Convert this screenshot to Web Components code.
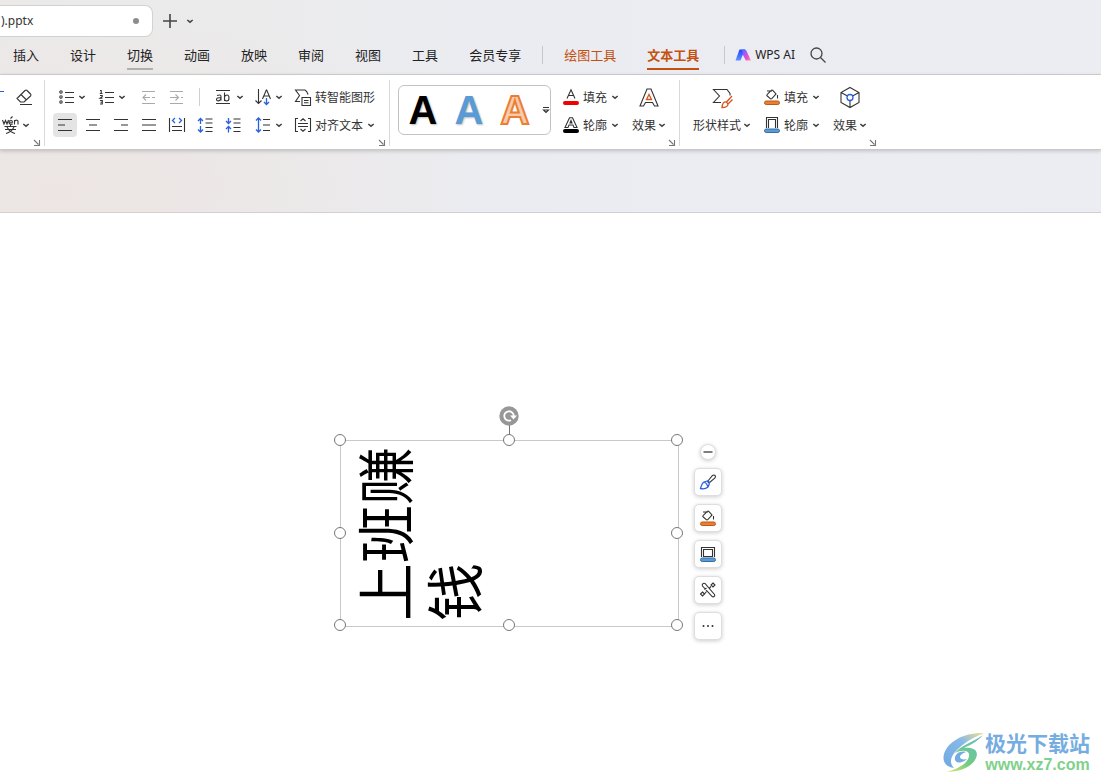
<!DOCTYPE html>
<html lang="zh-CN">
<head>
<meta charset="utf-8">
<title>WPS</title>
<style>
html,body{margin:0;height:100%}
body{font:12px/18px "Noto Sans","Noto Sans CJK SC",sans-serif;color:#222;overflow:hidden}
</style>
</head>
<body>
<wps-app></wps-app>
<script>
const pen = (color, width) => `fill="none" stroke="${color}" stroke-width="${width}"`;
const line = pen('currentColor', 1.1);
const blue = pen('#2b5fe0', 1.3);
const rust = pen('#d4571e', 1.3);
const grey = pen('#aaa', 1.1);
const BUCKET = `<path d="M3 2h5M3.300 5.300L7 1.700q1-1 2 0l3 3.300-4 4.300q-1 1-2 0L3.300 7q-1-.800 0-1.700zM12 5l-1 .500M13.500 6v3.500" ${line}/>`;
const ICONS = {
  plus: [16, `<path d="M8 1v14M1 8h14" ${pen('#444', 1.6)}/>`],
  chev: [8, `<path d="M1.300 3l2.700 2.200 2.700-2.200" ${pen('#444', 1.5)}/>`],
  search: [18, `<circle cx="7.500" cy="7.500" r="5.500" ${pen('#444', 1.3)}/><path d="M11.500 11.500l5 5" ${pen('#444', 1.3)}/>`],
  logo: [16, `<defs><linearGradient id="a" x2="0" y2="1"><stop stop-color="#2b3cff"/><stop offset="1" stop-color="#5a96ff"/></linearGradient><linearGradient id="b" x1="0" x2="1" y1="0" y2="1"><stop stop-color="#2f7dff"/><stop offset=".4" stop-color="#b455f0"/><stop offset=".7" stop-color="#f052c8"/><stop offset="1" stop-color="#ffa0a0"/></linearGradient></defs><path d="M4.500 2.500H10L5.500 13.500H.500z" fill="url(#a)"/><path d="M7 2.500h2.500c1 0 1.500.500 2 1.500l4.500 9.500h-4c-1 0-1.500-.500-2-1.500L8 8z" fill="url(#b)"/>`],
  eraser: [18, `<path d="M2 10.500L10 2.500q1-1 2 0l3.500 3.500q1 1 0 2L9 14H5.500L2 10.500zM6 6.500l5.500 5.500M5 16.500h12" ${line}/>`],
  bullets: [16, `<g ${line}><circle cx="3" cy="3" r="1.200"/><circle cx="3" cy="8" r="1.200"/><circle cx="3" cy="13" r="1.200"/><path d="M7 3.500h9M7 8.500h9M7 13.500h9"/></g>`],
  numbers: [16, `<g ${line}><path d="M7 3.500h9M7 8.500h9M7 13.500h9M2 1.500h1.200v3M1.800 4.500h2.700M2 6.500h2.200v1.300L2 9.300h2.500M2 11.500h2.300v3.500H2M2.500 13.200h1.700"/></g>`],
  outdent: [16, `<path d="M1 2.500h13M1 14.500h13M11 8.500h3M9 8.500H1.500M5 5.500l-3 3 3 3" ${grey}/>`],
  indent: [16, `<path d="M1 2.500h13M1 14.500h13M12 8.500h2M1 8.500h8.500M6.500 5.500l3 3-3 3" ${grey}/>`],
  ab: [16, `<g ${line}><path d="M0 1.500h14M0 14.500h14M1 6.500q4-1.500 4 1v4M5 8.500q-4.500 0-4.500 1.800t2 1.600Q5 11.500 5 9M8.500 3.500v8.500M8.500 8q.500-2 2.500-2t2 3-2.200 3-2.300-2"/></g>`],
  textdir: [16, `<path d="M3.500 0v14.500M.500 11.500l3 3 3-3M7.500 10l3.800-9h.400l3.800 9M9 7h5" ${line}/><path d="M11.500 9v6.500M9 13l2.500 2.500L14 13" ${blue}/>`],
  smart: [18, `<path d="M6 13.500H1.500L5.500 7.500 1.500 2H11q2 1 3 4.500M8 9.500h8.500v8H8zM10 12.500h4.500M10 14.800h4.500" ${line}/>`],
  left: [16, `<path d="M1 2.500h14M1 8h7M1 13.500h14" ${line}/>`],
  center: [16, `<path d="M1 2.500h14M4 8h8M1 13.500h14" ${line}/>`],
  right: [16, `<path d="M1 2.500h14M8 8h7M1 13.500h14" ${line}/>`],
  justify: [16, `<path d="M1 2.500h14M1 8h14M1 13.500h14" ${line}/>`],
  distribute: [16, `<path d="M.500 1v14M15.500 1v14M3 9.500h10M3 13.500h10" ${line}/><path d="M6 1L3.500 3.500 6 6M10 1l2.500 2.500L10 6" ${blue}/>`],
  spaceup: [16, `<path d="M8.500 2h7M8.500 6h7M8.500 10.500h7M8.500 14.500h7" ${line}/><path d="M3.500 7V1.500M1 4l2.500-2.500L6 4M3.500 9v6M1 12.500L3.500 15 6 12.500" ${blue}/>`],
  spacedown: [16, `<path d="M8.500 2h7M8.500 6h7M8.500 10.500h7M8.500 14.500h7" ${line}/><path d="M3.500 1v5.500M1 4l2.500 2.500L6 4M3.500 15.500v-6M1 12l2.500-2.500L6 12" ${blue}/>`],
  linespace: [16, `<path d="M8 2.500h7M8 8h7M8 13.500h7" ${line}/><path d="M3.500 1v14M1 3.500L3.500 1 6 3.500M1 12.500L3.500 15 6 12.500" ${blue}/>`],
  aligntext: [16, `<path d="M3 1.500H.500v13H3M13 1.500h2.500v13H13M3 6.500h10M3 9.500h10M5.500 4L8 1.800 10.500 4M5.500 12L8 14.200 10.500 12" ${line}/>`],
  wen: [18, `<g ${line}><path d="M1.500 4l1.500 4 1.500-3.500L6 8l1.500-4M8 6.200h3.500q0-2-1.700-2T8 6.200t1.900 1.900h1.800M9.500 2.500L11.500.500M13.500 8.500V4M13.500 5.500q.800-1.500 2.300-1.300T17 6v2.500M3.500 10.500h12M9.500 8.500v2M13 11q-2.500 5-8 6.500M6 11q2.500 5 8 6.500M4 13.500h11"/></g>`],
  fontfill: [16, `<path d="M4 9.500L8 .800l4 8.700M5.500 6.500h5" ${line}/><rect y="12" width="16" height="4" rx="2" fill="#f00000"/>`],
  fontline: [16, `<path d="M2 10.500L6.500.700h3l4.500 9.800h-3L10 8H6l-1 2.500zM7 6l1-2.500L9 6z" ${line}/><rect y="12" width="16" height="4" rx="2" fill="#000"/>`],
  fonteffect: [20, `<path d="M1 19L8 2h4l7 17h-3.500L13.500 15.500h-7L4.500 19z" ${line}/><path d="M7.500 12.500L10 7.500l2.500 5z" ${rust}/>`],
  shapestyle: [20, `<path d="M9 15.500H1.500l6-6.500-6-6.500H15l3 4v2" ${line}/><path d="M20 9l-5.500 6M20.500 12.500l-4.500 4.500M14.500 15q-4-1-4.500 5.500 6 0 6-3.500z" ${rust}/>`],
  bucket: [16, `${BUCKET}<rect x=".5" y="12" width="15" height="3.500" rx="1.700" fill="#ed7d31" stroke="#b85a18"/>`],
  outline: [16, `<path d="M2.500 11V.500h11V11M4.500 11V2.500h7V11" ${line}/><rect x=".5" y="12" width="15" height="3.500" rx="1.700" fill="#5b9bd5" stroke="#376fa5"/>`],
  frame: [16, `<path d="M1.500 11V1.500h13V11M3.500 10.500v-7h9v7z" ${line}/><rect x=".5" y="12" width="15" height="3.500" rx="1.700" fill="#5b9bd5" stroke="#376fa5"/>`],
  cube: [22, `<path d="M11 1.500l9 5v10l-9 5-9-5v-10zM2 6.500l6 3.300M20 6.500l-6 3.300M11 15v6" ${line}/><circle cx="11" cy="11.500" r="3" ${blue}/>`],
  brush: [16, `<path d="M7.500 7.500l5-6q1.500-1 2.500 0t0 2.500L9 9z" ${line}/><path d="M7 7q2 0 2.500 2.500M7 7L4 8q-2 1-3.500 6.500Q5 15.500 8 13l1.500-3.500M4 8q3 1 4 5" ${blue}/>`],
  wand: [16, `<path d="M5 1.500q-1.500-.500-2.300.300T2.500 4l9.700 10.500q1 .700 2 0t.300-2zM6.500 6L4.500 7.500M9 6.500l2-2M6.500 9.500L4.500 12M2.500 10l2 2-2 2-2-2zM13 1l2 2-2 2-2-2z" ${line}/>`],
  more: [16, `<g fill="#333"><circle cx="3.500" cy="8" r="1"/><circle cx="8" cy="8" r="1"/><circle cx="12.500" cy="8" r="1"/></g>`],
  minus: [12, `<path d="M1.500 6h9" ${pen('#555', 1.5)}/>`],
  launch: [6, `<path d="M0 0l4.500 4.500M5.500 0v5.500H0" ${pen('#777', 1.1)}/>`],
  gallery: [8, `<path d="M1 1.500h6M1.500 4h5L4 6.500z" ${pen('#333', 1.1)}/>`],
  rotate: [20, `<circle cx="10" cy="10" r="9.700" fill="#979797"/><path d="M12 14.200a4.700 4.700 0 1 1 2.700-4" ${pen('#fff', 1.8)}/><path d="M11 9.500h7l-3.500 4z" fill="#fff"/>`],
  swirl: [42, `<defs><linearGradient id="s" x1="0" y1="1" x2="1" y2="0"><stop stop-color="#6fa9e0"/><stop offset=".6" stop-color="#86b8ea"/><stop offset="1" stop-color="#f0e28a"/></linearGradient><linearGradient id="t" x1="0" y1="1" x2="1" y2="0"><stop stop-color="#e2e572"/><stop offset=".4" stop-color="#72cc80"/><stop offset="1" stop-color="#62b9d0"/></linearGradient></defs><path d="M41 1C22 0 5 9 1 22c-2 8 2 13 10 14-5-5-4-12 4-19C23 9 32 5 41 1z" fill="url(#s)"/><path d="M12 21c6-8 18-11 28-18-6 7-13 10-19 13 10-1 15 3 12 10-4 9-16 14-30 14 13-3 24-10 23-18-1-4-8-4-14-1z" fill="url(#t)"/><path d="M23 20c-7-2-12 3-11 8 2 4 8 3 12-1-4 1-7 0-7-2s3-4 6-5z" fill="#74abe2"/>`]
};

class Base extends HTMLElement {
  connectedCallback() {
    if (this.shadowRoot) return;
    this.attachShadow({mode: 'open'}).innerHTML = this.render();
  }
  attr(n) { return this.getAttribute(n) || ''; }
}
const define = (name, render) => customElements.define(name, class extends Base { render() { return render(this); } });

define('ui-icon', el => {
  const [size, body] = ICONS[el.attr('name')];
  return `<style>:host{display:block;flex:none}svg{display:block;overflow:visible}</style>
    <svg width="${size}" height="${size}" viewBox="0 0 ${size} ${size}" aria-hidden="true">${body}</svg>`;
});

define('doc-tabs', () => `<style>
  :host{display:flex;align-items:center;height:32px;padding:5px 0}
  .tab{box-sizing:border-box;display:flex;align-items:center;justify-content:space-between;width:153px;height:32px;padding:0 13px 0 1px;background:#fff;border:1px solid #d2d2d2;border-left:0;border-radius:0 8px 8px 0;color:#333;text-decoration:none}
  .dot{width:6px;height:6px;border-radius:50%;background:#8c8c8c}
  button{border:0;background:none;padding:0;color:#444}
  .add{margin-left:9px}.list{margin-left:8px}
  </style><a class="tab" href="#doc"><span>).pptx</span><span class="dot"></span></a>
  <button class="add" aria-label="新建"><ui-icon name="plus"></ui-icon></button>
  <button class="list" aria-label="标签列表"><ui-icon name="chev"></ui-icon></button>`);

define('menu-link', () => `<style>
  :host{display:block;font-size:13px;line-height:20px;white-space:nowrap}
  a{display:block;color:inherit;text-decoration:none;padding-bottom:3px;border-bottom:2px solid transparent}
  :host([hover]) a{border-color:#b0b0b0}
  :host([tool]){color:#c4500f}
  :host([active]){font-weight:700}
  :host([active]) a{border-color:#c4500f}
  </style><a href="#"><slot></slot></a>`);

define('menu-bar', () => `<style>
  :host{display:flex;align-items:flex-start;height:29px;padding:3px 0 0 13px;border-bottom:1px solid #d3d3d5}
  nav{display:flex;gap:31px}
  .sep{width:1px;height:18px;background:#c8c8cc;margin:1px 21px 0}
  button{border:0;background:none;padding:0;font:inherit;color:inherit;display:flex;align-items:center;gap:4px;height:20px}
  .end{margin:1px 10px 0 25px}
  .search{margin-left:14px;color:#444}
  </style><nav><menu-link>插入</menu-link><menu-link>设计</menu-link><menu-link hover>切换</menu-link><menu-link>动画</menu-link><menu-link>放映</menu-link><menu-link>审阅</menu-link><menu-link>视图</menu-link><menu-link>工具</menu-link><menu-link>会员专享</menu-link></nav>
  <span class="sep"></span><nav><menu-link tool>绘图工具</menu-link><menu-link tool active>文本工具</menu-link></nav>
  <span class="sep end"></span><button><ui-icon name="logo"></ui-icon>WPS AI</button>
  <button class="search" aria-label="搜索"><ui-icon name="search"></ui-icon></button>`);

define('rb-tool', el => `<style>
  :host{display:block;flex:none}
  button{display:flex;align-items:center;justify-content:center;box-sizing:border-box;gap:4px;height:24px;min-width:24px;margin:2px 0;padding:0;border:0;border-radius:4px;background:none;font:inherit;color:#333;white-space:nowrap}
  .i{width:16px;display:flex;justify-content:center}
  .t{padding-top:2px}
  :host([menu]) button,:host([label]) button{padding:0 3px 0 5px}
  :host([on]) button{background:#e4e4e4}
  </style><button aria-label="${el.attr('label') || el.attr('hint')}"><span class="i"><ui-icon name="${el.attr('icon')}"></ui-icon></span>${el.hasAttribute('label') ? `<span class="t">${el.attr('label')}</span>` : ''}${el.hasAttribute('menu') ? '<ui-icon name="chev"></ui-icon>' : ''}</button>`);

define('rb-big', el => `<style>
  :host{display:block;flex:none}
  button{display:grid;grid-template-rows:28px 28px;align-items:center;justify-items:center;border:0;background:none;padding:0;font:inherit;color:#333}
  .l{display:flex;align-items:center;gap:2px;white-space:nowrap}
  .t{padding-top:2px}
  </style><button><ui-icon name="${el.attr('icon')}"></ui-icon><span class="l"><span class="t">${el.attr('label')}</span><ui-icon name="chev"></ui-icon></span></button>`);

define('rb-group', () => `<style>
  :host{display:flex;position:relative;box-sizing:border-box;height:66px;margin-top:5px;padding-top:3px;border-right:1px solid #d9d9d9}
  :host([last]){border-color:transparent}
  button{position:absolute;right:4px;bottom:0;border:0;background:none;padding:0}
  </style><slot></slot><button aria-label="更多设置"><ui-icon name="launch"></ui-icon></button>`);

define('word-art', () => `<style>
  :host{display:flex;align-items:center;box-sizing:border-box;width:153px;height:50px;margin:2px 7px 0 0;border:1px solid #c3c3c3;border-radius:6px;padding-left:1px}
  button{width:46px;height:46px;border:0;background:none;padding:0;font:700 40px/46px "Liberation Sans",sans-serif;text-shadow:1px 1px 2px #0004}
  .k{color:#000}.b{color:#5b9bd5}
  .o{color:#f8cbad;-webkit-text-stroke:2px #ed7d31;text-shadow:none}
  .m{width:12px;height:24px;display:grid;place-items:center end}
  </style><button class="k">A</button><button class="b">A</button><button class="o">A</button><button class="m" aria-label="更多样式"><ui-icon name="gallery"></ui-icon></button>`);

define('ribbon-bar', () => `<style>
  :host{display:flex;height:74px;background:#fff;border-bottom:1px solid #c9c9cc;box-shadow:0 1px 4px #0003;position:relative}
  .first{width:45px}.para{width:345px;padding-left:8px}.font{width:290px;padding-left:8px}.shape{width:201px;padding-left:13px}
  .grid{display:grid;grid-template-columns:197px auto;grid-template-rows:28px 28px}
  .row{display:flex;align-items:center;gap:4px}
  .in{margin-left:4px}
  .sep{width:1px;height:18px;background:#d0d0d0;margin:0 7px 0 6px}
  .stack{display:flex;flex-direction:column}
  .fx{margin-left:10px}
  .mid{margin-left:8px}
  .clip{overflow:hidden;width:45px}
  .erase{display:flex;align-items:center}
  .edge{width:4px;height:1px;background:#2b5fe0;margin:0 8px 12px 0}
  .pinyin{margin-left:-3px}
  </style>
  <rb-group class="first"><div class="stack clip"><div class="erase"><span class="edge"></span><rb-tool icon="eraser" hint="清除格式"></rb-tool></div><rb-tool class="pinyin" icon="wen" hint="拼音" menu></rb-tool></div></rb-group>
  <rb-group class="para"><div class="grid">
    <div class="row"><rb-tool icon="bullets" hint="项目符号" menu></rb-tool><rb-tool icon="numbers" hint="编号" menu></rb-tool><rb-tool class="in" icon="outdent" hint="减少缩进"></rb-tool><rb-tool icon="indent" hint="增加缩进"></rb-tool><span class="sep"></span><rb-tool icon="ab" hint="字符间距" menu></rb-tool></div>
    <div class="row"><rb-tool icon="textdir" hint="文字方向" menu></rb-tool><rb-tool icon="smart" label="转智能图形"></rb-tool></div>
    <div class="row"><rb-tool on icon="left" hint="左对齐"></rb-tool><rb-tool icon="center" hint="居中"></rb-tool><rb-tool icon="right" hint="右对齐"></rb-tool><rb-tool icon="justify" hint="两端对齐"></rb-tool><rb-tool icon="distribute" hint="分散对齐"></rb-tool><rb-tool icon="spaceup" hint="增大段距"></rb-tool><rb-tool icon="spacedown" hint="减小段距"></rb-tool></div>
    <div class="row"><rb-tool icon="linespace" hint="行距" menu></rb-tool><rb-tool icon="aligntext" label="对齐文本" menu></rb-tool></div>
  </div></rb-group>
  <rb-group class="font"><word-art></word-art>
    <div class="stack"><rb-tool icon="fontfill" label="填充" menu></rb-tool><rb-tool icon="fontline" label="轮廓" menu></rb-tool></div>
    <rb-big class="fx" icon="fonteffect" label="效果"></rb-big></rb-group>
  <rb-group class="shape" last><rb-big icon="shapestyle" label="形状样式"></rb-big>
    <div class="stack mid"><rb-tool icon="bucket" label="填充" menu></rb-tool><rb-tool icon="outline" label="轮廓" menu></rb-tool></div>
    <rb-big class="fx" icon="cube" label="效果"></rb-big></rb-group>`);

define('text-shape', () => `<style>
  :host{position:absolute;left:340px;top:227px;width:337px;height:185px;border:1px solid #c8c8cf}
  .text{position:absolute;left:10px;top:100%;box-sizing:border-box;width:185px;padding:0 5px;font-size:58px;line-height:69px;color:#000;transform-origin:0 0;transform:rotate(-90deg)}
  p{margin:0;word-break:break-all}
  i{position:absolute;box-sizing:border-box;width:12px;height:12px;margin:-7px;border:1px solid #777;border-radius:50%;background:#fff}
  .l{left:0}.c{left:50%}.r{left:100%}.t{top:0}.m{top:50%}.b{top:100%}
  .stem{position:absolute;left:50%;top:-20px;height:20px;width:1px;margin-left:-1px;background:#777}
  ui-icon{position:absolute;left:50%;top:-35px;margin-left:-11px}
  </style><div class="text"><p>上班赚钱</p></div><span class="stem"></span><ui-icon name="rotate"></ui-icon>
  <i class="l t"></i><i class="c t"></i><i class="r t"></i><i class="l m"></i><i class="r m"></i><i class="l b"></i><i class="c b"></i><i class="r b"></i>`);

define('float-tools', () => `<style>
  :host{position:absolute;left:694px;top:231px;display:flex;flex-direction:column;align-items:center;gap:8px}
  button{box-sizing:border-box;width:28px;height:28px;display:grid;place-items:center;padding:0;border:1px solid #dedede;border-radius:5px;background:#fff;color:#333;box-shadow:0 1px 4px #0003}
  .x{width:16px;height:16px;border-radius:50%}
  </style><button class="x" aria-label="收起"><ui-icon name="minus"></ui-icon></button>
  <button aria-label="样式"><ui-icon name="brush"></ui-icon></button><button aria-label="填充"><ui-icon name="bucket"></ui-icon></button><button aria-label="轮廓"><ui-icon name="frame"></ui-icon></button><button aria-label="美化"><ui-icon name="wand"></ui-icon></button><button aria-label="更多"><ui-icon name="more"></ui-icon></button>`);

define('site-mark', () => `<style>
  :host{position:absolute;right:11px;bottom:6px;display:flex;align-items:center}
  .t{display:block;font-weight:700;font-size:21px;line-height:24px;color:#75ade0;white-space:nowrap}
  .u{display:block;font:700 16px/20px "Liberation Sans",sans-serif;color:#7fd18b;text-align:center}
  </style><ui-icon name="swirl"></ui-icon><div><span class="t">极光下载站</span><span class="u">www.xz7.com</span></div>`);

define('wps-app', () => `<style>
  :host{display:flex;flex-direction:column;min-height:100vh;background:radial-gradient(ellipse 420px 200px at 60px 190px,#ece5e3 0%,#ece5e300 100%),linear-gradient(90deg,#ebeae9 0,#ebebec 250px,#ebecf1 480px,#ebedf2 100%)}
  .strip{height:62px;border-bottom:1px solid #d0d0d3}
  main{position:relative;flex:1;background:#fff}
  </style><doc-tabs></doc-tabs><menu-bar></menu-bar><ribbon-bar></ribbon-bar><div class="strip"></div>
  <main><text-shape></text-shape><float-tools></float-tools><site-mark></site-mark></main>`);
</script>
</body>
</html>
